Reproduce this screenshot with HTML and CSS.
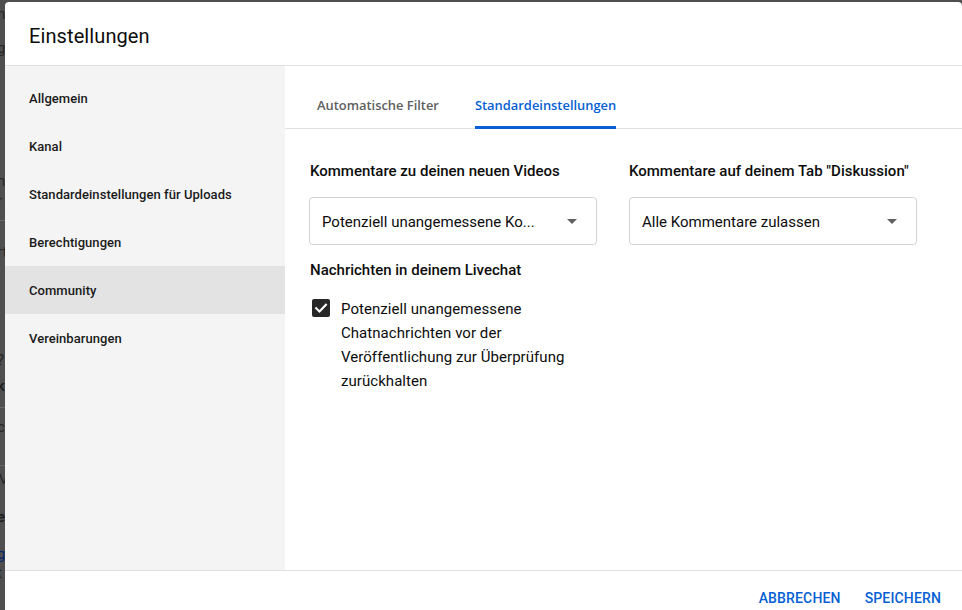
FILE: index.html
```html
<!DOCTYPE html>
<html lang="de">
<head>
<meta charset="utf-8">
<title>Einstellungen</title>
<link rel="stylesheet" href="styles.css">
</head>
<body>
<div class="backdrop">
  <span class="bg-glyph" style="top:5px">n</span>
  <span class="bg-glyph" style="top:39px">g</span>
  <span class="bg-glyph" style="top:172px">n</span>
  <span class="bg-glyph" style="top:192px">r</span>
  <span class="bg-line" style="top:220px"></span>
  <span class="bg-glyph" style="top:243px">rt</span>
  <span class="bg-glyph" style="top:351px">?</span>
  <span class="bg-glyph dark" style="top:377px">k</span>
  <span class="bg-line" style="top:407px"></span>
  <span class="bg-glyph" style="top:418px">c</span>
  <span class="bg-line" style="top:465px"></span>
  <span class="bg-glyph" style="top:470px">M</span>
  <span class="bg-glyph dark" style="top:508px">e</span>
  <span class="bg-glyph blue" style="top:545px">g</span>
  <span class="bg-glyph" style="top:564px">t</span>
</div>

<div class="dialog">
  <header class="dialog-header">
    <h1 class="dialog-title">Einstellungen</h1>
  </header>

  <div class="dialog-body">
    <nav class="sidebar">
      <div class="nav-item">Allgemein</div>
      <div class="nav-item">Kanal</div>
      <div class="nav-item">Standardeinstellungen für Uploads</div>
      <div class="nav-item">Berechtigungen</div>
      <div class="nav-item active">Community</div>
      <div class="nav-item">Vereinbarungen</div>
    </nav>

    <main class="main">
      <div class="tabs">
        <div class="tab">Automatische Filter</div>
        <div class="tab selected">Standardeinstellungen</div>
      </div>

      <div class="content">
        <div class="grid">
          <div class="field">
            <div class="label">Kommentare zu deinen neuen Videos</div>
            <div class="select">
              <span class="select-text">Potenziell unangemessene Ko...</span>
              <span class="arrow"></span>
            </div>
          </div>
          <div class="field">
            <div class="label">Kommentare auf deinem Tab "Diskussion"</div>
            <div class="select">
              <span class="select-text">Alle Kommentare zulassen</span>
              <span class="arrow"></span>
            </div>
          </div>
        </div>

        <div class="label label-chat">Nachrichten in deinem Livechat</div>
        <div class="check-row">
          <div class="check-wrap">
            <span class="checkbox">
              <svg viewBox="0 0 18 18" width="18" height="18">
                <path d="M4.2 9.2 L7.5 12.4 L13.9 5.8" fill="none" stroke="#fff" stroke-width="2.1" stroke-linecap="square"/>
              </svg>
            </span>
          </div>
          <div class="check-text">Potenziell unangemessene Chatnachrichten vor der Veröffentlichung zur Überprüfung zurückhalten</div>
        </div>
      </div>
    </main>
  </div>

  <footer class="dialog-footer">
    <button class="btn">Abbrechen</button>
    <button class="btn">Speichern</button>
  </footer>
</div>
</body>
</html>
```

FILE: styles.css
```css
html, body {
  margin: 0;
  padding: 0;
  height: 100%;
}

body {
  background: #4f4f4f;
  overflow: hidden;
  font-family: Roboto, "Liberation Sans", Arial, sans-serif;
  color: #0d0d0d;
}

.backdrop {
  position: absolute;
  inset: 0;
}

.bg-glyph {
  position: absolute;
  left: -3px;
  font-size: 15px;
  line-height: 18px;
  color: #262626;
  font-family: Roboto, sans-serif;
}

.bg-glyph.dark {
  color: #1a1a1a;
  font-weight: 500;
}

.bg-glyph.blue {
  color: #03286b;
}

.bg-line {
  position: absolute;
  left: 0;
  width: 5px;
  height: 1px;
  background: #666;
}

.dialog {
  position: absolute;
  left: 5px;
  top: 2px;
  width: 957px;
  height: 640px;
  background: #fff;
  border-radius: 4px 4px 0 0;
  display: flex;
  flex-direction: column;
}

.dialog-header {
  height: 63px;
  border-bottom: 1px solid #e0e0e0;
  display: flex;
  align-items: center;
  padding-left: 24px;
  flex-shrink: 0;
}

.dialog-title {
  margin: 0;
  font-size: 20px;
  font-weight: 400;
  color: #0d0d0d;
  letter-spacing: 0.1px;
  padding-top: 4px;
}

.dialog-body {
  display: flex;
  height: 504px;
  flex-shrink: 0;
}

.sidebar {
  width: 280px;
  background: #f4f4f4;
  padding-top: 8px;
  box-sizing: border-box;
  flex-shrink: 0;
}

.nav-item {
  height: 48px;
  display: flex;
  align-items: center;
  padding-left: 24px;
  font-size: 13px;
  font-weight: 500;
  color: #1a1a1a;
  letter-spacing: 0.05px;
}

.nav-item.active {
  background: #e3e3e3;
}

.main {
  flex: 1;
  display: flex;
  flex-direction: column;
}

.tabs {
  display: flex;
  gap: 36px;
  padding-left: 32px;
  padding-top: 18px;
  border-bottom: 1px solid #e0e0e0;
  height: 63px;
  box-sizing: border-box;
}

.tab {
  display: flex;
  align-items: center;
  height: 42px;
  border-bottom: 3px solid transparent;
  font-family: "Open Sans", "Noto Sans", sans-serif;
  font-size: 12.9px;
  font-weight: 600;
  color: #606060;
  border-radius: 0;
}

.tab.selected {
  color: #065fd4;
  border-bottom-color: #065fd4;
  border-radius: 2px 2px 0 0;
}

.content {
  padding: 30px 0 0 24px;
}

.grid {
  display: grid;
  grid-template-columns: 288px 288px;
  column-gap: 32px;
}

.label {
  font-size: 15px;
  font-weight: 500;
  line-height: 24px;
  color: #0d0d0d;
}

.grid .field:first-child .label,
.label-chat {
  padding-left: 1px;
}

.select {
  margin-top: 14px;
  height: 48px;
  box-sizing: border-box;
  border: 1px solid #d3d3d3;
  border-radius: 4px;
  display: flex;
  align-items: center;
  justify-content: space-between;
  padding: 1px 20px 0 12px;
}

.select-text {
  font-size: 15px;
  color: #0d0d0d;
}

.arrow {
  width: 0;
  height: 0;
  border-left: 5px solid transparent;
  border-right: 5px solid transparent;
  border-top: 5px solid #606060;
  margin-right: -1px;
}

.label-chat {
  margin-top: 13px;
}

.check-row {
  display: flex;
  gap: 8px;
  margin-top: 14px;
  width: 288px;
}

.check-wrap {
  width: 24px;
  height: 24px;
  display: flex;
  align-items: center;
  justify-content: center;
  flex-shrink: 0;
}

.checkbox {
  width: 18px;
  height: 18px;
  background: #282828;
  border-radius: 2px;
  display: block;
}

.checkbox svg {
  display: block;
}

.check-text {
  font-size: 15px;
  line-height: 24px;
  color: #0d0d0d;
  padding-top: 1px;
  letter-spacing: 0.05px;
}

.dialog-footer {
  border-top: 1px solid #e0e0e0;
  display: flex;
  justify-content: flex-end;
  align-items: flex-start;
  padding: 14px 9px 0 0;
  gap: 0;
}

.btn {
  background: none;
  border: none;
  padding: 4px 12px;
  font-family: Roboto, "Liberation Sans", sans-serif;
  font-size: 14px;
  font-weight: 500;
  text-transform: uppercase;
  color: #065fd4;
  letter-spacing: 0.15px;
  line-height: 18px;
  cursor: pointer;
}
```
